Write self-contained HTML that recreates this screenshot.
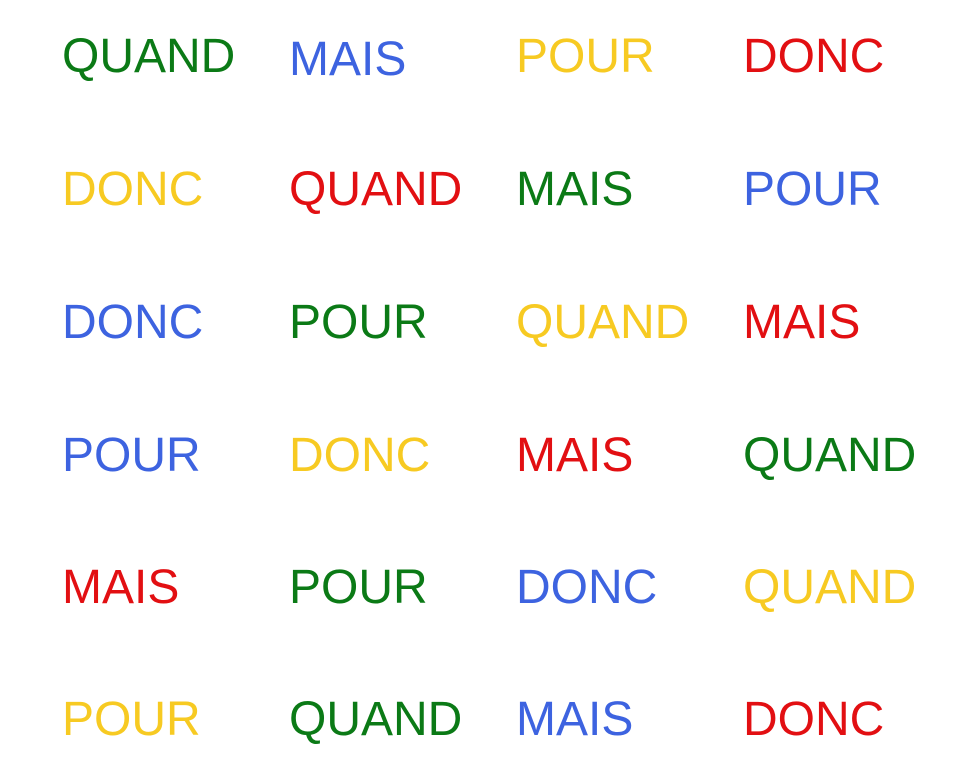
<!DOCTYPE html>
<html><head><meta charset="utf-8"><style>
html,body{margin:0;padding:0;background:#fff;width:977px;height:779px;overflow:hidden}
span{position:absolute;font-family:"Liberation Sans",Arial,sans-serif;font-size:48px;line-height:1;white-space:nowrap}
.g{color:#0b7a16}.b{color:#3d63e0}.y{color:#f7ca22}.r{color:#e20f12}
</style></head><body>
<span class="g" style="left:62px;top:33px">QUAND</span>
<span class="b" style="left:289px;top:36px">MAIS</span>
<span class="y" style="left:516px;top:33px">POUR</span>
<span class="r" style="left:743px;top:33px">DONC</span>

<span class="y" style="left:62px;top:166px">DONC</span>
<span class="r" style="left:289px;top:166px">QUAND</span>
<span class="g" style="left:516px;top:166px">MAIS</span>
<span class="b" style="left:743px;top:166px">POUR</span>

<span class="b" style="left:62px;top:299px">DONC</span>
<span class="g" style="left:289px;top:299px">POUR</span>
<span class="y" style="left:516px;top:299px">QUAND</span>
<span class="r" style="left:743px;top:299px">MAIS</span>

<span class="b" style="left:62px;top:432px">POUR</span>
<span class="y" style="left:289px;top:432px">DONC</span>
<span class="r" style="left:516px;top:432px">MAIS</span>
<span class="g" style="left:743px;top:432px">QUAND</span>

<span class="r" style="left:62px;top:564px">MAIS</span>
<span class="g" style="left:289px;top:564px">POUR</span>
<span class="b" style="left:516px;top:564px">DONC</span>
<span class="y" style="left:743px;top:564px">QUAND</span>

<span class="y" style="left:62px;top:696px">POUR</span>
<span class="g" style="left:289px;top:696px">QUAND</span>
<span class="b" style="left:516px;top:696px">MAIS</span>
<span class="r" style="left:743px;top:696px">DONC</span>
</body></html>
